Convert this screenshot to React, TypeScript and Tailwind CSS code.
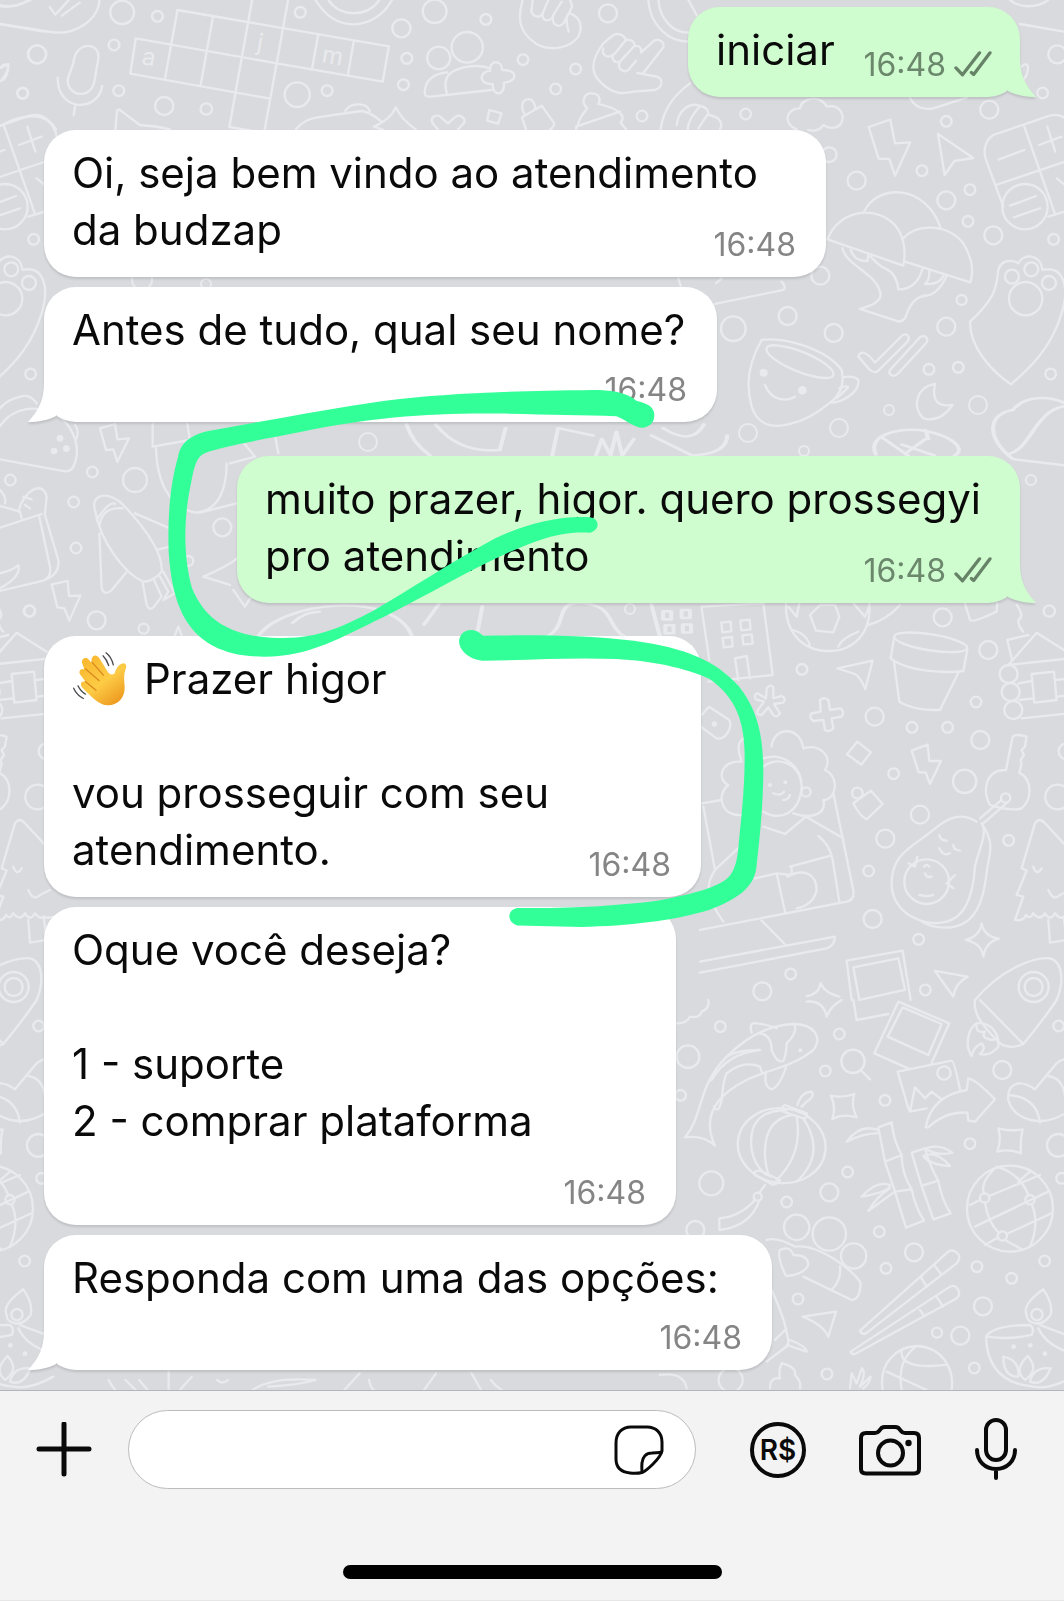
import type { ReactNode } from "react";

type Dot = [number, number, number];

function Circles({ items, filled = false }: { items: Dot[]; filled?: boolean }) {
  return (
    <>
      {items.map(([x, y, r], i) => (
        <circle key={i} cx={x} cy={y} r={r} fill={filled ? "#e9eaed" : "none"} stroke={filled ? "none" : undefined} />
      ))}
    </>
  );
}

function TopDoodles() {
  return (
    <>
      <g transform="scale(0.3393 0.3333)">
        <Circles
          items={[
            [360, 37, 35], [464, 49, 16], [109, 163, 27], [336, 135, 16], [67, 280, 16], [350, 272, 16], [484, 318, 27],
            [608, 327, 17], [885, 37, 16], [876, 284, 37], [964, 272, 16], [1183, 85, 27], [1281, 34, 35], [1432, 58, 16],
            [1199, 175, 16], [1189, 254, 16], [1293, 174, 34], [1377, 142, 46],
          ]}
        />
        <path d="M930 0C960 50 1000 73 1040 73S1130 50 1155 0M968 0C1000 50 1080 55 1118 0" />
        <path d="M523 30L1146 139M400 115L816 190L1128 245M384 221L797 296M400 115L384 221M523 30L486 238M628 48L591 257M743 0L676 381L740 392M849 0L780 390M938 103L920 205M1043 122L1025 227M1146 139L1128 245" />
        <path d="M216 190C222 120 295 125 290 175L278 245C268 300 195 290 200 235ZM170 233C170 340 290 335 301 258M222 315L217 345" />
        <path d="M0 72L150 96C220 108 290 60 293 0M147 22L163 44L203 0M182 47L235 8M0 18C30 24 60 15 90 0M0 205L25 192C25 215 10 235 0 245" />
        <path d="M1318 217C1280 220 1250 240 1252 282C1255 292 1262 290 1270 290L1448 270M1318 285C1300 225 1330 210 1378 200C1410 195 1430 200 1445 205C1445 180 1480 180 1480 210C1530 210 1525 245 1485 248C1490 290 1450 290 1452 252C1410 255 1410 215 1445 212" />
        <path d="M340 390L345 332Q350 325 360 335L412 375Q460 378 500 388M0 378C60 345 130 330 165 388M872 388C890 365 910 355 950 350L1065 333Q1090 335 1125 365M1018 333C1030 308 1080 305 1090 333M1130 390L1102 380Q1150 360 1167 322Q1180 355 1225 388" />
        <path d="M1290 388L1275 370C1265 350 1290 340 1300 352L1320 370L1340 352C1355 340 1375 355 1367 370L1350 388M1442 330L1478 340L1468 371L1436 362Z" />
      </g>
      <g transform="translate(500 0) scale(0.3333)">
        <Circles items={[[324, 40, 27], [69, 179, 16], [227, 207, 16], [167, 267, 16], [426, 348, 16]]} />
        <path d="M68 0C50 60 60 100 110 132C150 155 210 145 235 110C250 80 240 50 210 40C195 45 200 75 206 95M98 0L94 35C100 52 120 55 128 40L145 0M128 40C125 70 155 65 160 45L185 5M160 45C150 85 190 85 195 60L217 20L210 0" />
        <path d="M310 130C280 170 265 210 300 245C340 285 370 282 400 275L465 270C490 262 490 235 470 230L412 219M310 130L340 105C350 100 370 100 378 120C340 165 345 165 325 170C310 168 305 155 310 145M378 120C395 118 405 125 403 138L360 185C345 190 335 180 338 165M403 138C420 135 425 145 423 158L462 122C475 115 495 125 490 142L430 219M360 185C350 205 370 220 385 210L408 182" />
        <path d="M445 0C450 80 510 125 565 125M475 0C480 60 520 98 565 98M565 0L590 45" />
        <path d="M228 388L235 370C240 350 255 335 262 325C240 305 255 278 275 280C300 280 302 300 295 312C320 318 340 325 350 332C370 345 372 355 362 368L378 388M228 380L360 335M66 352L125 317L163 370Q160 385 150 388M66 352L78 388M75 345C55 310 75 290 95 300Q108 315 105 328" />
      </g>
    </>
  );
}

function EdgeDoodles() {
  return (
    <>
      <g transform="translate(640 0) scale(0.3333)">
        <Circles
          items={[
            [317, 342, 16], [919, 364, 16], [1048, 329, 27], [1252, 163, 27], [1208, 279, 16], [568, 464, 22], [650, 542, 27],
            [846, 512, 16], [990, 569, 16], [919, 601, 27], [984, 664, 16], [1060, 706, 27], [1241, 718, 16], [541, 827, 27],
            [965, 900, 15], [443, 948, 27], [581, 999, 27], [919, 980, 27], [280, 986, 37], [867, 1108, 16], [955, 1102, 16],
            [1232, 1122, 16], [1116, 830, 21], [1174, 808, 21], [1227, 849, 21], [1157, 896, 50], [1155, 620, 68],
          ]}
        />
        <Circles filled items={[[371, 1118, 12], [487, 1171, 13]]} />
        <path d="M1110 0C1140 25 1190 25 1225 0M1140 72L1272 95M470 388C430 375 435 325 480 325C485 290 545 285 560 320C600 310 620 350 600 375C585 388 565 385 550 375C540 392 520 395 505 390M810 293C825 325 850 330 880 325L980 293M1145 200C1160 185 1170 195 1160 225L1150 240" />
        <path d="M62 388C70 320 110 280 150 250M110 375C115 330 150 305 180 318C160 340 145 360 143 388M180 318C200 320 205 335 205 340L175 385M205 345C240 350 250 370 240 388" />
        <path d="M686 381L751 359L765 430L811 427L765 527L748 477L716 476ZM894 402L1000 474L943 483L914 525Z" />
        <path d="M1315 440C1310 370 1270 330 1220 350L1060 405C1030 425 1030 460 1040 485L1090 620M1153 380L1245 642M1068 555L1290 480M1076 479L1153 450M1197 435L1265 410M1222 380L1246 455M1225 650L1290 630M1110 617L1188 588M1122 652L1200 625M1250 535L1275 555" />
        <path d="M563 718C590 640 690 610 760 670C790 700 800 750 790 797ZM672 636C710 550 860 550 903 687M790 715C830 670 920 670 970 730C1000 780 1000 820 991 847L795 785M607 745C620 800 715 820 722 885C720 905 700 915 660 927L770 963Q785 968 795 955C820 880 850 890 870 885C895 875 910 850 920 828M775 868C815 870 840 840 848 803M632 750Q645 785 683 783L685 765M692 770Q720 800 735 805Q770 820 775 868M868 810Q870 840 855 852Q900 855 912 825" />
        <path d="M990 965C1060 900 1070 870 1075 810C1085 775 1120 780 1135 790C1150 760 1200 760 1208 810C1270 795 1290 860 1265 940C1240 1020 1200 1080 1113 1153C1050 1110 990 1040 990 965" />
        <ellipse cx="480" cy="1085" rx="108" ry="30" transform="rotate(22 480 1085)" />
        <path d="M655 1070C660 1050 680 1055 705 1088L785 1008C800 995 815 1010 800 1028L715 1112Q705 1122 690 1110ZM750 1110L840 1012C855 1003 868 1015 858 1030L775 1120Q760 1135 748 1120ZM115 835L122 858M225 912L430 870Q440 862 425 845M228 850L245 835" />
        <path d="M365 1020C330 1080 315 1150 335 1220C355 1280 400 1285 450 1272C520 1255 560 1215 570 1208C600 1210 660 1180 655 1140Q640 1125 608 1133M365 1020C440 1010 560 1050 605 1110L608 1133Q608 1180 570 1208M598 1165Q620 1155 625 1162L590 1195M375 1155C395 1205 440 1205 465 1190M885 1152C830 1160 815 1220 850 1255Q900 1270 938 1215Q870 1225 885 1152" />
      </g>
      <g transform="translate(700 600) scale(0.3333)">
        <Circles
          items={[
            [728, 52, 27], [1048, 33, 17], [306, 208, 16], [865, 150, 27], [524, 350, 27], [828, 306, 16], [636, 382, 16],
            [743, 382, 16], [841, 420, 27], [581, 521, 16], [794, 544, 35], [660, 644, 27], [556, 716, 27], [506, 813, 16],
            [926, 721, 16], [518, 957, 27], [656, 1018, 16], [272, 1122, 16], [187, 1174, 27], [676, 1170, 16], [1100, 454, 24],
            [1073, 591, 37], [472, 579, 16], [318, 576, 14], [917, 594, 14], [680, 845, 67], [926, 222, 27], [932, 276, 27],
            [940, 330, 27], [1001, 1161, 45], [1001, 1161, 27],
          ]}
        />
        <Circles filled items={[[43, 372, 8], [210, 555, 6], [256, 547, 6]]} />
        <path d="M5 20L190 10L218 225L25 245M5 25L28 180M64 68L92 65L94 94L67 97ZM121 62L149 59L152 88L124 91ZM68 114L96 111L98 139L71 142ZM127 106L155 103L158 131L130 134ZM115 240L105 175L140 168L150 235" />
        <path d="M258 10C255 100 310 153 385 153C460 153 515 100 508 10M330 45L360 15L405 15L418 50L400 97L348 92ZM280 90Q325 105 330 140M475 95Q425 115 415 140M265 20L290 50L298 10M460 10L495 50L508 20M505 75Q560 60 600 15" />
        <path d="M412 205L518 182L496 267Q480 230 465 222ZM582 115L572 175C620 215 740 220 790 213L802 150M582 185L598 305Q640 332 720 330L775 218" />
        <ellipse cx="692" cy="127" rx="111" ry="24" transform="rotate(9 692 127)" />
        <path d="M200 265Q210 250 220 262L220 295L245 288Q260 295 250 308L222 312L240 340Q230 355 220 345L205 322L185 345Q165 345 175 328L192 305L168 298Q160 285 172 280L198 295ZM360 300Q372 290 385 300L390 330L422 325Q435 335 425 350L395 355L400 385Q390 398 375 390L370 360L340 363Q325 350 335 340L362 335ZM472 425L513 457L484 494L441 463ZM5 345L27 320L88 360Q95 375 85 395Q70 420 50 415L5 382M635 452L683 434L688 483L723 483L690 552L677 517L656 517ZM460 610L513 572L548 612L500 658Q480 650 460 610" />
        <path d="M125 485C105 430 120 415 150 410M215 440C220 380 300 375 310 445C360 430 400 470 375 510C420 530 410 600 370 600C380 640 340 660 280 640M125 485C60 480 50 540 85 555C50 580 60 650 125 645M190 500C220 470 300 480 305 560C300 640 240 665 190 635M190 475C250 455 310 500 305 570M220 580Q240 590 252 575M250 600Q265 600 270 585" />
        <path d="M190 680L255 702L318 650L430 715M400 580L460 870Q465 900 440 905L0 990M355 708Q390 735 398 780L418 905M5 610L65 600M10 620L45 810M120 740L45 810C20 850 10 880 70 965M165 835L230 820L255 935M270 800L390 768M262 830C320 800 350 830 350 870Q340 915 290 925M275 800V825L230 820M0 1085L405 1010Q405 1035 380 1045L0 1118M185 962L255 1033" />
        <path d="M918 510L938 410Q950 400 980 410L975 440L965 450L972 465L962 480L965 490L958 518C1000 540 995 600 965 625Q930 635 870 615C850 580 850 510 918 510M925 605L850 670M905 600L840 655" />
        <path d="M830 665C790 640 750 645 700 690C640 740 570 760 575 860C585 950 680 980 740 965C800 950 820 880 825 800C835 750 865 700 845 670C890 740 865 760 860 820C850 900 830 980 740 983C700 983 680 975 665 965M658 885Q680 892 700 885M672 800Q680 790 688 800M675 820Q680 835 695 830M718 705Q720 722 740 722M760 735Q760 750 780 752M718 745Q730 770 750 760M625 790L645 800L652 770M740 850L760 865M745 845L765 825" />
        <path d="M845 970Q852 1010 897 1016Q858 1025 850 1070Q845 1030 797 1020Q840 1008 845 970ZM965 805L1005 670Q1018 650 1035 670L1100 740M965 805L980 812L950 885L970 890L945 960Q970 965 978 945Q990 960 1000 940Q1020 965 1035 940Q1050 965 1065 940Q1080 960 1092 950Q1110 960 1150 940L1190 930M1000 800Q1010 830 1025 805M1045 870Q1060 905 1080 885L1110 870M1045 960L1050 1028L1100 1020L1092 955" />
        <path d="M1100 155L1010 98L925 195L1110 175M985 105L922 120L935 175M955 250L995 243M958 300L1000 295M965 355L1110 340M995 222L1062 215L1070 300L1003 308ZM1068 240L1110 235M1072 290L1110 285M795 10L810 60Q815 70 890 35L892 10M950 15Q975 50 955 60Q955 80 970 95" />
        <path d="M455 1200L440 1082L608 1052L632 1200M478 1200L460 1102L595 1075L615 1170L478 1200M705 1113L803 1130Q765 1150 760 1190ZM320 1188Q355 1185 362 1150Q375 1180 418 1190M825 1200C900 1110 1000 1070 1050 1075C1090 1085 1092 1150 1070 1200L1050 1230" />
      </g>
      <g transform="translate(660 1000) scale(0.3333)">
        <Circles
          items={[
            [181, 80, 16], [84, 170, 34], [62, 286, 16], [538, 102, 16], [579, 184, 35], [496, 213, 16], [675, 301, 16],
            [1027, 210, 27], [1196, 78, 16], [930, 431, 16], [1195, 436, 34], [154, 550, 36], [563, 516, 16], [508, 577, 27],
            [380, 606, 16], [410, 682, 38], [508, 702, 50], [581, 768, 38], [658, 695, 16], [762, 757, 27], [678, 805, 16],
            [951, 800, 16], [1055, 835, 16], [1154, 783, 16], [1205, 535, 16], [414, 897, 16], [969, 919, 27], [831, 998, 15],
            [901, 1007, 27], [943, 1104, 16], [501, 1122, 16], [212, 1140, 36], [106, 690, 27], [852, 219, 20], [293, 590, 12],
            [1050, 626, 129], [974, 594, 14], [1110, 599, 14], [1027, 708, 14], [1131, 944, 17],
          ]}
        />
        <Circles filled items={[[421, 151, 6], [1061, 1040, 7], [1111, 1036, 7], [1155, 1061, 7]]} />
        <path d="M50 70Q80 70 90 50Q120 55 125 35Q150 25 145 0M440 5Q490 0 500 50Q510 20 545 0M580 0L590 60L685 42M745 205L643 160L715 5L868 70L815 188M728 22L845 72L805 165L683 110ZM800 325L750 335L745 325L713 215L875 182Q882 182 900 268M750 335L765 262L795 295L815 275L845 298M797 382C810 310 860 280 920 270L925 235Q950 240 1005 298L945 365L925 362L922 338C880 335 840 350 805 382ZM602 210L630 238" />
        <path d="M945 0C940 40 960 70 1020 130Q1050 150 1090 132Q1150 60 1190 0M960 0L1090 132M935 168C910 130 930 80 950 70C990 65 1020 100 1015 140Q990 170 960 162Q980 145 965 130Q940 140 935 168M950 72Q945 100 975 95Q960 115 1000 120" />
        <path d="M75 412C130 350 110 260 200 170C260 110 330 75 400 72C460 72 490 110 460 150C400 200 320 210 260 240C180 280 120 340 165 437Q130 405 75 412M275 98Q265 65 290 70Q330 75 350 85M300 100Q335 105 335 150Q350 190 370 183Q380 160 380 130Q410 100 405 78M318 215Q310 260 335 268Q360 260 380 195M200 170Q230 150 300 150Q200 160 155 240M162 320Q175 345 185 300Q190 240 200 220Q250 180 300 200L305 215" />
        <ellipse cx="365" cy="437" rx="132" ry="112" transform="rotate(8 365 437)" />
        <path d="M380 330Q260 330 275 450Q285 500 320 525M395 345Q310 360 315 470Q320 520 330 530M410 350Q430 460 350 540M430 355Q500 460 410 545M370 335Q362 320 375 315L440 340Q445 355 430 355ZM285 525Q280 512 300 512L360 540Q350 555 335 553ZM412 315Q425 275 455 275Q465 290 440 305L425 320M315 555L297 580M285 600Q240 650 178 655V690Q270 680 298 602" />
        <path d="M512 287Q550 295 583 282Q572 315 590 352Q550 340 517 357Q530 320 512 287ZM1015 385Q1050 395 1088 388Q1080 420 1083 460Q1045 445 1012 455Q1025 420 1015 385Z" />
        <path d="M655 382L695 367Q700 420 725 465L675 485ZM675 485L705 575L755 568Q725 520 725 465M705 575L738 683L792 662Q765 620 755 568M755 458L795 445Q810 500 835 542L785 558ZM785 558L820 658L872 640Q845 600 835 542M560 425Q600 370 655 390Q660 400 650 400Q610 400 560 425M605 590Q650 540 690 555Q690 575 605 590M700 578L625 633Q650 590 690 565M795 445Q840 430 877 458Q830 470 795 445M790 468Q830 450 870 498Q810 495 790 468" />
        <path d="M1290 300L1230 330C1150 390 1060 360 1045 300C1040 250 1080 235 1125 268L1190 190Q1220 165 1290 175M1045 285Q1130 290 1140 368M1165 228Q1210 235 1215 290" />
        <path d="M930 615L960 600M988 588L1140 525M945 680L1165 575M975 735L1015 712M1040 702L1175 640M1000 510Q960 550 972 580M975 608Q985 670 1018 700M1010 500Q1080 520 1105 585M1115 612Q1140 670 1110 740M1035 720L1085 748M1075 545L1110 515" />
        <path d="M320 720Q350 710 405 740C480 730 590 820 602 850Q600 900 575 900L430 830M515 870Q545 840 540 800M378 828Q350 770 360 750Q390 735 400 765Q445 765 445 795Q430 825 378 828M428 950L528 935L505 1010Q490 975 428 950Z" />
        <path d="M600 992L865 755Q880 745 897 765Q900 780 890 790L618 1000Q605 1005 600 992M572 1055L870 860Q890 850 898 880Q895 895 885 898L585 1062Q575 1065 572 1055M782 830L800 860M825 798L845 825M780 930L792 948M830 890L850 920" />
        <path d="M668 1170C655 1090 710 1040 770 1038C840 1040 885 1100 875 1170M725 1055Q720 1110 860 1095M680 1115L800 1170M770 1038Q710 1080 725 1170M330 1165Q330 1130 360 1135Q355 1110 365 1090Q410 1100 405 1125Q425 1145 420 1165M570 1165L575 1120L590 1150L605 1105Q620 1115 600 1160L632 1130Q630 1150 610 1165M335 870Q385 980 385 1035L320 1085M345 1020L375 990M390 1020Q440 1040 440 1055L380 1035M0 1125Q70 1115 80 1165" />
        <path d="M1100 945Q1085 915 1150 868Q1180 910 1172 945Q1150 975 1125 970Q1100 965 1100 945M1240 1130Q1170 1170 1120 1160C1010 1150 980 1080 978 1010Q1000 975 1110 975Q1125 985 1115 1005Q1050 1020 980 1010M1135 985Q1160 1040 1240 1060M1140 975L1260 1020M1030 1070Q1080 1080 1075 1130Q1030 1130 1030 1070M1103 1068Q1060 1110 1095 1140Q1140 1110 1103 1068M1172 1105Q1120 1100 1110 1145Q1150 1160 1172 1105" />
      </g>
    </>
  );
}

function MiddleDoodles() {
  return (
    <>
      <Circles items={[[889, 410, 5], [978, 405, 9], [748, 433, 9], [839, 428, 9], [804, 451, 5], [1031, 480, 5], [368, 442, 9], [630, 609, 5], [142, 280, 10], [206, 284, 5]]} />
      <g transform="translate(150 370) scale(0.583 0.3635)">
        <path d="M1245 232C1230 180 1280 160 1320 165C1380 180 1400 220 1380 235M1255 185L1300 235M1330 165L1335 190M1290 205L1345 235M1300 225L1330 190M1568 262L1480 245C1430 180 1440 120 1480 110C1500 70 1540 70 1568 90M1475 230C1510 215 1520 110 1568 100" />
        <path d="M440 150Q450 200 480 235M490 150Q530 230 600 220L610 160M690 235L700 160L760 180M765 235L775 190L790 235L800 170L810 235L830 190M880 160Q930 210 950 150M860 180L930 235Q990 230 990 180" />
        <path d="M185 735C220 640 420 600 450 735M245 695Q265 665 290 665M470 700L495 645M560 735L570 650M680 735C720 700 690 640 740 640C800 650 780 700 815 735M860 645L875 735M880 664h14v22h-14ZM912 660h14v22h-14ZM884 702h14v22h-14ZM914 700h14v22h-14Z" />
      </g>
      <g transform="translate(0 400) scale(0.3333)">
        <Circles items={[[31, 240, 16], [277, 216, 16], [405, 240, 36], [221, 306, 16], [228, 444, 16], [89, 633, 16], [290, 661, 27], [431, 686, 15], [667, 382, 27], [565, 483, 15]]} />
        <Circles filled items={[[180, 115, 10], [162, 153, 10], [199, 146, 10]]} />
        <path d="M0 78C40 20 110 10 180 50C225 90 245 150 220 200Q212 215 195 214L0 178M225 75Q238 90 230 115M0 25Q20 0 60 -10Q90 -20 110 10M300 85L345 72L352 118L387 115L352 185L340 148L318 150ZM155 553L203 543L207 588L241 587L208 662L193 625L172 622Z" />
        <path d="M0 383L125 342M118 350L150 500Q155 530 130 542L0 573M135 345L175 480Q180 520 140 538M55 335C70 270 130 240 140 290L135 340M0 270Q20 290 15 310M0 318L60 335L65 355M70 290L95 298M75 315L90 325M0 520Q40 510 55 495Q65 530 0 565" />
        <path d="M285 330C270 280 330 270 375 320C440 390 490 460 485 515Q460 545 430 545C370 520 300 420 285 330M298 380Q305 320 368 325M290 360Q330 300 345 312M298 400L305 565Q315 590 335 570L378 518M405 340L510 385M470 450L510 440M428 548L440 615Q450 635 462 620L485 590L460 535M480 530L505 575L490 600L525 580L490 515" />
        <path d="M458 72V140L570 120L562 72M468 140C470 260 520 330 590 338C660 330 680 260 680 190M600 338L710 310M700 90L765 170L690 190M820 80L835 160M712 475Q680 500 610 530L690 555M700 570L735 620L750 595M525 705L535 680L545 705" />
      </g>
      <g transform="translate(0 1380) scale(0.3393 0.3333)">
        <path d="M320 0Q330 20 340 30M370 0L400 30M410 0L435 30M497 -25V30M565 -10L530 30M640 0Q655 15 672 0M745 30Q800 -10 930 0Q880 15 790 20M1060 -20L1015 30M1088 0Q1090 20 1102 30M1285 -20L1250 30M1390 -20L1418 30M1447 0Q1460 20 1480 30" />
      </g>
    </>
  );
}

function Wallpaper() {
  return (
    <svg aria-hidden="true" viewBox="0 0 1064 1390" className="absolute inset-x-0 top-0 w-full" fill="none" stroke="#e9eaed" strokeWidth="7" strokeLinecap="round" strokeLinejoin="round">
      <g className="[&>circle]:stroke-2">
        <TopDoodles />
        <MiddleDoodles />
        <EdgeDoodles />
      </g>
      <g transform="translate(-1020 0)">
        <EdgeDoodles />
      </g>
      <g fill="#e9eaed" stroke="none" fontFamily="Inter, sans-serif" fontSize="24">
        <text x="141" y="64" transform="rotate(10 141 64)">a</text>
        <text x="256" y="50" transform="rotate(10 256 50)">j</text>
        <text x="321" y="62" transform="rotate(10 321 62)">m</text>
      </g>
    </svg>
  );
}

function InkMarks() {
  return (
    <svg aria-hidden="true" viewBox="0 0 1064 1390" className="pointer-events-none absolute inset-x-0 top-0 w-full" fill="#33ff99">
      <g transform="translate(150 370) scale(0.583 0.3635)">
        <path d="M865 125C866 100 850 90 835 85C815 60 790 55 760 55C600 58 500 65 400 85C300 108 200 140 110 165C70 175 52 200 48 240C35 310 30 400 32 500C38 640 60 760 160 785C260 805 320 740 400 680C500 600 600 500 680 462C710 448 735 445 755 448C772 440 772 410 755 405C700 400 640 425 590 465C520 525 450 600 380 665C330 705 290 740 220 737C140 735 95 690 72 600C55 500 60 400 68 330C74 290 75 240 95 228C120 212 180 195 260 170C380 130 480 118 600 120C680 123 740 125 800 127C820 140 830 158 845 159C860 155 865 140 865 125Z" />
        <path d="M530 745C532 720 545 712 555 716C565 720 568 728 572 731C680 728 760 732 830 745C920 765 970 800 1010 870C1040 930 1052 1000 1052 1100C1052 1200 1045 1300 1040 1370C1035 1430 1000 1460 960 1485C900 1515 820 1530 740 1532L630 1528C612 1520 612 1485 630 1480C720 1482 800 1474 870 1460C920 1445 960 1430 985 1405C1005 1385 1008 1340 1010 1300C1015 1220 1020 1150 1020 1060C1020 970 1005 900 960 850C920 820 860 800 800 795C720 790 650 798 570 800C545 795 530 770 530 745Z" />
      </g>
    </svg>
  );
}

function WavingHand() {
  return (
    <svg role="img" aria-label="👋" viewBox="160 60 168 165" className="h-14 w-14" fill="none" strokeLinecap="round" strokeLinejoin="round">
      <defs>
        <linearGradient id="skin" x1="0" y1="0" x2="0.7" y2="1">
          <stop offset="0" stopColor="#f9b52c" />
          <stop offset="0.6" stopColor="#fdcb45" />
          <stop offset="1" stopColor="#ee9d22" />
        </linearGradient>
      </defs>
      <path d="M219 82C222 70 235 68 242 80L268 122Q278 135 288 125C292 112 300 97 314 95C325 95 324 108 320 115C315 130 316 145 318 165C320 200 295 224 264 221C240 218 222 200 190 167C182 155 190 146 202 152L185 130C178 120 186 108 197 114L191 97C186 83 200 74 210 84L218 94Z" fill="url(#skin)" />
      <path d="M220 92L254 131M200 112L241 147M200 150L232 176" stroke="#d98a1e" strokeWidth="4" />
      <path d="M262 64Q278 76 284 100M253 73Q264 84 270 102M165 170Q174 190 194 201M178 163Q186 180 200 188" stroke="#4a4a4f" strokeWidth="4" />
    </svg>
  );
}

function Ticks() {
  return (
    <svg aria-label="Entregue" role="img" viewBox="943 155 116 78" className="mb-1.5 ml-2 h-[26px] w-[38px]" fill="none" stroke="#668267" strokeWidth="10" strokeLinecap="round" strokeLinejoin="round">
      <path d="M949 206L969 227L1021 160M996 220L1003 226L1053 160" />
    </svg>
  );
}

type BubbleProps = {
  lines: ReactNode[];
  width: string;
  gap?: string;
  sent?: boolean;
  tail?: boolean;
  ownRow?: string;
};

function Bubble({ lines, width, gap = "", sent = false, tail = false, ownRow }: BubbleProps) {
  const time = (
    <span className={`flex shrink-0 items-end ${sent ? "" : "mr-0.5"}`}>
      <time className={`text-[32px] leading-9 ${sent ? "text-[#6b876c]" : "text-[#858585]"}`}>16:48</time>
      {sent && <Ticks />}
    </span>
  );
  const body = ownRow ? lines : lines.slice(0, -1);
  return (
    <li className={`relative max-w-full rounded-[32px] px-7 py-3.5 drop-shadow-[0_2px_1px_rgba(0,0,0,0.12)] ${width} ${gap} ${sent ? "self-end bg-[#cffdcf]" : "self-start bg-white"}`}>
      {tail && (
        <svg aria-hidden="true" viewBox="0 0 32 40" className={`absolute bottom-0 h-10 w-8 ${sent ? "-right-4 fill-[#cffdcf]" : "-left-4 -scale-x-100 fill-white"}`}>
          <path d="M16 0C16 18 21 28 32 40C21 40 12 38 4 34L0 0Z" />
        </svg>
      )}
      <div className="relative whitespace-nowrap text-[42px] leading-[57px] text-[#0a0a0a]">
        {body.map((line, i) => (
          <p key={i} className="flex h-[57px] items-center">{line}</p>
        ))}
        {ownRow ? (
          <div className={`flex justify-end ${ownRow}`}>{time}</div>
        ) : (
          <div className="flex items-end justify-between">
            <p className="mb-[5px]">{lines[lines.length - 1]}</p>
            {time}
          </div>
        )}
      </div>
    </li>
  );
}

export default function App() {
  return (
    <main className="flex min-h-screen flex-col overflow-hidden bg-[#f3f3f3] font-['Inter','Liberation_Sans',sans-serif]">
      <section aria-label="Conversa" className="relative grow overflow-hidden bg-[#d9dade]">
        <Wallpaper />
        <ul className="relative flex flex-col px-11 pb-5 pt-[7px]">
          <Bubble sent tail width="w-[332px]" lines={["iniciar"]} />
          <Bubble width="w-[782px]" gap="mt-[33px]" lines={["Oi, seja bem vindo ao atendimento", "da budzap"]} />
          <Bubble tail width="w-[673px]" gap="mt-2.5" ownRow="mt-3.5" lines={["Antes de tudo, qual seu nome?"]} />
          <Bubble sent tail width="w-[783px]" gap="mt-[34px]" lines={["muito prazer, higor. quero prossegyi", "pro atendimento"]} />
          <Bubble
            width="w-[657px]"
            gap="mt-[33px]"
            lines={[<><WavingHand /><span className="ml-4">Prazer higor</span></>, "", "vou prosseguir com seu", "atendimento."]}
          />
          <Bubble width="w-[632px]" gap="mt-2.5" ownRow="mt-[26px]" lines={["Oque você deseja?", "", "1 - suporte", "2 - comprar plataforma"]} />
          <Bubble tail width="w-[728px]" gap="mt-2.5" ownRow="mt-3.5" lines={["Responda com uma das opções:"]} />
        </ul>
        <InkMarks />
      </section>

      <footer className="border-t border-[#b4b4bc] pt-[19px] text-[#0a0a0a]">
        <form className="flex items-center pl-9 pr-[46px]" onSubmit={(e) => e.preventDefault()}>
          <button type="button" aria-label="Anexar" className="mr-9 w-14 shrink-0">
            <svg viewBox="0 1 56 56" className="h-14 w-14" fill="none" stroke="currentColor" strokeWidth="5" strokeLinecap="round">
              <path d="M28 3V53M3 28H53" />
            </svg>
          </button>
          <div className="flex h-[79px] min-w-0 grow items-center rounded-full border border-[#bcbcbe] bg-white pl-8 pr-[31px]">
            <input aria-label="Mensagem" className="min-w-0 grow bg-transparent text-[42px] outline-none" />
            <button type="button" aria-label="Figurinhas" className="shrink-0">
              <svg viewBox="0 0 50 50" className="h-[50px] w-[50px]" fill="none" stroke="currentColor" strokeWidth="3" strokeLinecap="round" strokeLinejoin="round">
                <path d="M28 47.500C24 48.500 20 48.500 16 48C7 47 2 42 2 34V18C2 8 8 2 17 2H33C42 2 48 8 48 17V26C47 31 43 35 39 39C35 43 32 46 28 47.500Z" />
                <path d="M28 47C28 45 27.500 42 28 38C28.500 32 32 28 38 28C42 27.500 45 28 47.500 27" />
              </svg>
            </button>
          </div>
          <div className="ml-[54px] flex shrink-0 items-center gap-[52px]">
            <button type="button" aria-label="Pagamento R$" className="flex h-14 w-14 items-center justify-center rounded-full border-4 border-[#0a0a0a] text-[28px] font-semibold">
              R$
            </button>
            <button type="button" aria-label="Câmera">
              <svg viewBox="0 0 64 56" className="h-14 w-16" fill="none" stroke="currentColor" strokeWidth="4" strokeLinejoin="round">
                <path d="M8 11H17Q19.500 11 21 9L23.500 6Q25 5 27 5H37Q39 5 40.500 6L43 9Q44.500 11 47 11H56Q61 11 61 16V47Q61 51.500 56 51.500H8Q3 51.500 3 47V16Q3 11 8 11Z" />
                <circle cx="32.500" cy="31" r="12.500" />
                <circle cx="50.500" cy="21" r="3.200" fill="currentColor" stroke="none" />
              </svg>
            </button>
            <button type="button" aria-label="Gravar áudio">
              <svg viewBox="0 2 44 64" className="h-16 w-11" fill="none" stroke="currentColor" strokeWidth="4" strokeLinecap="round">
                <rect x="12" y="4" width="20" height="40" rx="10" />
                <path d="M3 34C3 45 11 53 22 53S41 45 41 34M22 53V62" />
              </svg>
            </button>
          </div>
        </form>
        <div className="mx-auto mb-[21px] mt-[76px] h-3.5 w-[379px] max-w-full rounded-full bg-black" />
        <div className="h-px bg-[#e6e6e6]" />
      </footer>
    </main>
  );
}
